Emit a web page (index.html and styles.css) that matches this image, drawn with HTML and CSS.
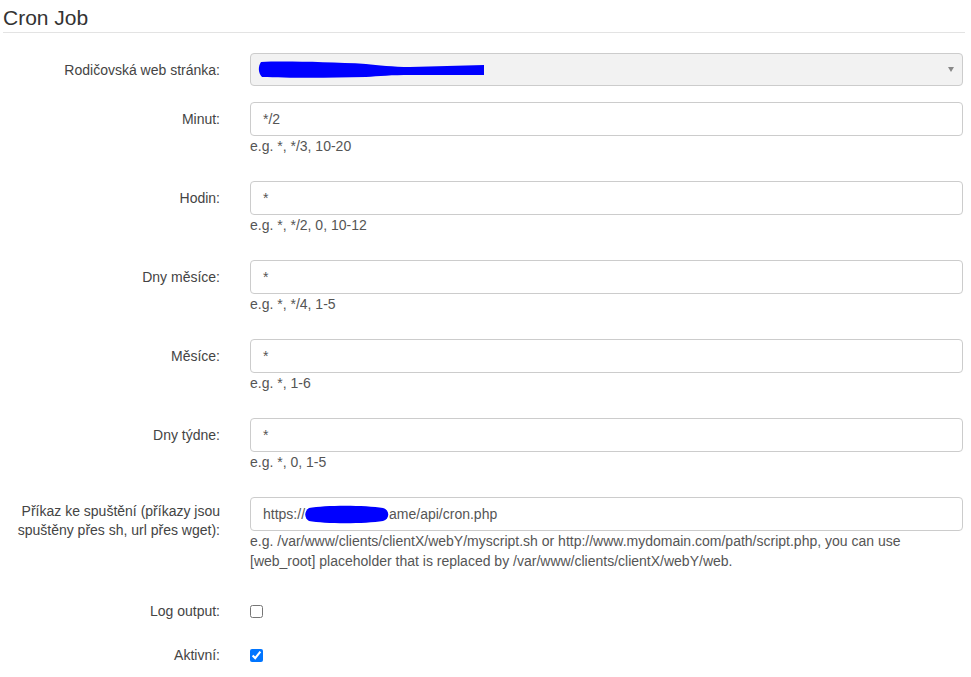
FILE: index.html
```html
<!DOCTYPE html>
<html lang="cs">
<head>
    <meta charset="UTF-8">
    <meta name="viewport" content="width=device-width, initial-scale=1.0">
    <title>Cron Job</title>
    <link rel="stylesheet" href="styles.css">
</head>
<body>
    <div class="page">
        <h2 class="title">Cron Job</h2>
        <form class="form">
            <div class="row">
                <label class="lbl">Rodičovská web stránka:</label>
                <div class="field">
                    <div class="select">
                        <svg class="redact" width="228" height="18" viewBox="0 0 228 18">
                            <path d="M3,1 C25,0 70,1 108,3 C120,4 135,6 152,6 L226,4 L226,14 L152,14 C135,14 120,15 108,16 C70,17 30,17 4,16 C0,12 0,5 3,1 Z" fill="#0000ff"/>
                        </svg>
                        <span class="caret"></span>
                    </div>
                </div>
            </div>

            <div class="row">
                <label class="lbl">Minut:</label>
                <div class="field">
                    <div class="input">*/2</div>
                    <div class="help">e.g. *, */3, 10-20</div>
                </div>
            </div>

            <div class="row">
                <label class="lbl">Hodin:</label>
                <div class="field">
                    <div class="input">*</div>
                    <div class="help">e.g. *, */2, 0, 10-12</div>
                </div>
            </div>

            <div class="row">
                <label class="lbl">Dny měsíce:</label>
                <div class="field">
                    <div class="input">*</div>
                    <div class="help">e.g. *, */4, 1-5</div>
                </div>
            </div>

            <div class="row">
                <label class="lbl">Měsíce:</label>
                <div class="field">
                    <div class="input">*</div>
                    <div class="help">e.g. *, 1-6</div>
                </div>
            </div>

            <div class="row">
                <label class="lbl">Dny týdne:</label>
                <div class="field">
                    <div class="input">*</div>
                    <div class="help">e.g. *, 0, 1-5</div>
                </div>
            </div>

            <div class="row">
                <label class="lbl lbl-wrap">Příkaz ke spuštění (příkazy jsou spuštěny přes sh, url přes wget):</label>
                <div class="field">
                    <div class="input">https://<svg class="blob" width="84" height="19" viewBox="0 0 84 19"><path d="M4,3 C20,0 60,0 78,3 C85,5 85,14 78,16 C60,19 20,19 4,16 C-1,13 -1,6 4,3 Z" fill="#0000ff"/></svg>ame/api/cron.php</div>
                    <div class="help">e.g. /var/www/clients/clientX/webY/myscript.sh or http://www.mydomain.com/path/script.php, you can use [web_root] placeholder that is replaced by /var/www/clients/clientX/webY/web.</div>
                </div>
            </div>

            <div class="row row-check">
                <label class="lbl">Log output:</label>
                <div class="field">
                    <input type="checkbox" class="check">
                </div>
            </div>

            <div class="row row-check">
                <label class="lbl">Aktivní:</label>
                <div class="field">
                    <input type="checkbox" class="check" checked>
                </div>
            </div>
        </form>
    </div>
</body>
</html>
```

FILE: styles.css
```css
body {
    margin: 0;
    font-family: 'Liberation Sans', Arial, sans-serif;
    font-size: 14px;
    color: #444;
    background-color: #fff;
}
.page {
    padding: 0 6px 0 3px;
}
.title {
    margin: 0;
    padding: 6px 0 2px;
    font-size: 21px;
    font-weight: normal;
    line-height: 24px;
    color: #333;
    border-bottom: 1px solid #e3e3e3;
}
.form {
    margin-top: 20px;
    padding-right: 2px;
}
.row {
    display: grid;
    grid-template-columns: 217px 1fr;
    column-gap: 30px;
    margin-bottom: 16px;
}
.lbl {
    text-align: right;
    padding-top: 7px;
    line-height: 20px;
    color: #444;
}
.lbl-wrap {
    padding-top: 5px;
    line-height: 19px;
}
.select {
    display: flex;
    justify-content: space-between;
    align-items: center;
    height: 33px;
    box-sizing: border-box;
    padding: 0 8px 0 7px;
    border: 1px solid #ccc;
    border-radius: 4px;
    background-color: #f2f2f2;
}
.caret {
    width: 0;
    height: 0;
    border-left: 3px solid transparent;
    border-right: 3px solid transparent;
    border-top: 5px solid #888;
}
.input {
    display: flex;
    align-items: center;
    height: 34px;
    box-sizing: border-box;
    padding: 0 12px;
    border: 1px solid #ccc;
    border-radius: 4px;
    background-color: #fff;
    color: #555;
    white-space: nowrap;
}
.blob {
    flex-shrink: 0;
}
.help {
    line-height: 20px;
    margin-bottom: 9px;
    color: #555;
}
.row-check {
    align-items: center;
    height: 30px;
    margin-bottom: 14px;
}
.row-check .lbl {
    padding-top: 0;
}
.row-check .field {
    display: flex;
    align-items: center;
}
.check {
    width: 13px;
    height: 13px;
    margin: 0;
}
```
